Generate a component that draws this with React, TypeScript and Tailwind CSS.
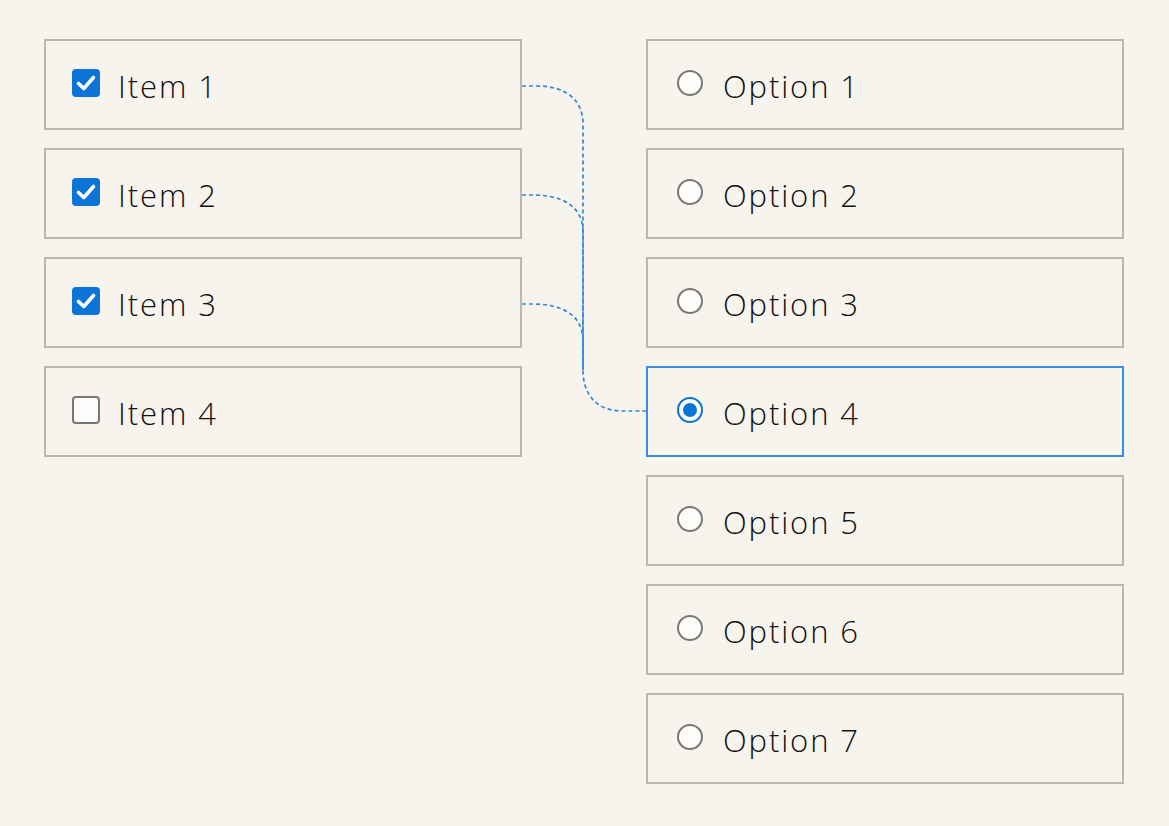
import React from 'react';

const items = [
    { label: 'Item 1', checked: true },
    { label: 'Item 2', checked: true },
    { label: 'Item 3', checked: true },
    { label: 'Item 4', checked: false },
];

const options = ['Option 1', 'Option 2', 'Option 3', 'Option 4', 'Option 5', 'Option 6', 'Option 7'];
const selected = 3;

const Checkbox: React.FC<{ checked: boolean }> = ({ checked }) =>
    checked ? (
        <span className="w-[28px] h-[28px] rounded-[4px] bg-[#0b74d6] flex items-center justify-center shrink-0 mb-[4px]">
            <svg width="24" height="24" viewBox="0 0 24 24" fill="none">
                <path d="M4.5 12.5 L9.8 17.5 L19.5 6.5" stroke="white" strokeWidth="3.6" strokeLinecap="round" strokeLinejoin="round" />
            </svg>
        </span>
    ) : (
        <span className="w-[28px] h-[28px] rounded-[4px] border-2 border-[#7a7876] bg-[#fdfcfa] shrink-0 mb-[4px]" />
    );

const Radio: React.FC<{ on: boolean }> = ({ on }) =>
    on ? (
        <span className="w-[26px] h-[26px] rounded-full border-[2.5px] border-[#0b74d6] bg-white flex items-center justify-center shrink-0 mb-[4px]">
            <span className="w-[14px] h-[14px] rounded-full bg-[#0b74d6]" />
        </span>
    ) : (
        <span className="w-[26px] h-[26px] rounded-full border-2 border-[#7a7876] bg-[#fdfcfa] shrink-0 mb-[4px]" />
    );

export default function App() {
    return (
        <div className="relative min-h-[826px] w-full bg-[#f7f4ee] text-[#111111]" style={{ fontFamily: '"Open Sans", sans-serif' }}>
            <div className="flex gap-[124px] pl-[44px] pt-[39px]">
                <div className="flex flex-col gap-[18px] w-[478px]">
                    {items.map((it) => (
                        <div key={it.label} className="h-[91px] border-2 border-[#bcb8b1] flex items-center pl-[26px] gap-[18px]">
                            <Checkbox checked={it.checked} />
                            <span className="text-[31px] font-light leading-none pt-[3px] tracking-[1.9px]">{it.label}</span>
                        </div>
                    ))}
                </div>
                <div className="flex flex-col gap-[18px] w-[478px]">
                    {options.map((o, i) => (
                        <div
                            key={o}
                            className={
                                i === selected
                                    ? 'h-[91px] border-2 border-[#3a8de0] flex items-center pl-[29px] gap-[20px]'
                                    : 'h-[91px] border-2 border-[#bcb8b1] flex items-center pl-[29px] gap-[20px]'
                            }
                        >
                            <Radio on={i === selected} />
                            <span className="text-[31px] font-light leading-none pt-[3px] tracking-[1.9px]">{o}</span>
                        </div>
                    ))}
                </div>
            </div>

            {/* connectors */}
            <svg className="absolute left-0 top-0 pointer-events-none" width="1169" height="826" fill="none">
                <g stroke="#2f86dc" strokeWidth="1.7" strokeDasharray="4 3">
                    <path d="M522 86 H537 C566 86 583 100 583 124 V370 C583 396 598 411 622 411 H646" />
                    <path d="M522 195 H533 C562 195 583 206 583 232 V370" />
                    <path d="M522 304 H533 C562 304 583 315 583 341 V370" />
                </g>
            </svg>
        </div>
    );
}
